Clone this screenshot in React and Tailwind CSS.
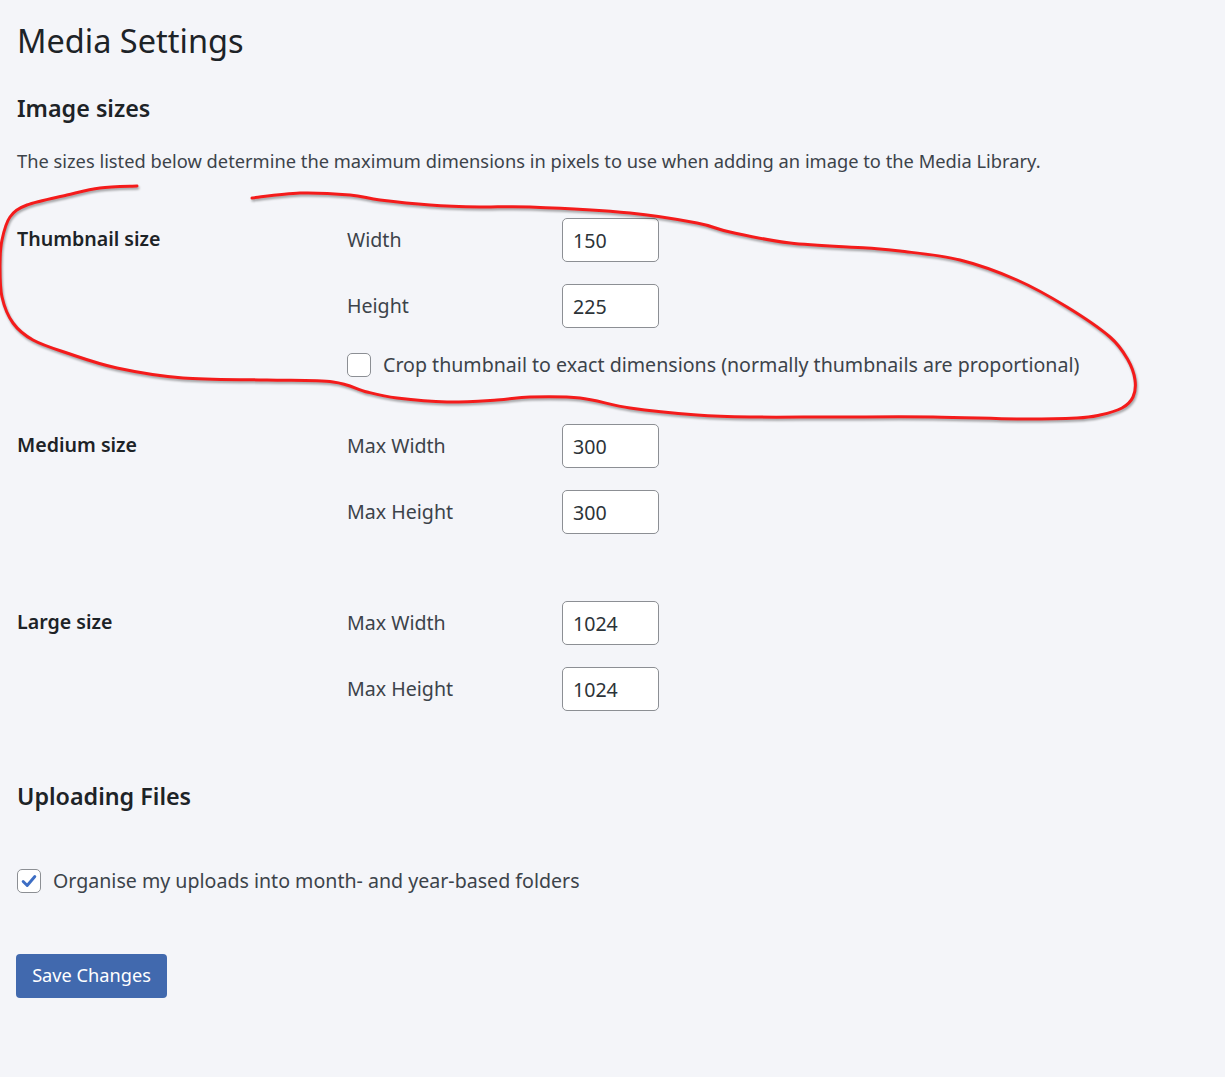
import React from 'react'

const font = "font-['Segoe_UI','Noto_Sans',sans-serif]"

// hand-drawn red loop around the thumbnail block
const loop = [
  [137, 186], [100, 188], [67, 195], [27, 205], [10, 217], [2, 240], [0, 265], [2, 297],
  [13, 323], [33, 340], [67, 353], [117, 368], [183, 378], [267, 380], [333, 382], [367, 392],
  [397, 398], [447, 402], [497, 400], [530, 397], [580, 398], [630, 408], [697, 415], [750, 417],
  [833, 417], [933, 417], [1017, 419], [1077, 418], [1100, 415], [1122, 408], [1133, 397],
  [1135, 380], [1128, 360], [1110, 337], [1067, 307], [1017, 280], [960, 260], [900, 251],
  [867, 248], [790, 243], [730, 232], [697, 223], [630, 213], [530, 207], [480, 207],
  [430, 205], [380, 200], [350, 195], [300, 193], [252, 198],
]

function smoothPath(pts) {
  let d = `M${pts[0][0]},${pts[0][1]}`
  for (let i = 0; i < pts.length - 1; i++) {
    const p0 = pts[i - 1] || pts[i]
    const p1 = pts[i]
    const p2 = pts[i + 1]
    const p3 = pts[i + 2] || p2
    const c1 = [p1[0] + (p2[0] - p0[0]) / 6, p1[1] + (p2[1] - p0[1]) / 6]
    const c2 = [p2[0] - (p3[0] - p1[0]) / 6, p2[1] - (p3[1] - p1[1]) / 6]
    d += ` C${c1[0]},${c1[1]} ${c2[0]},${c2[1]} ${p2[0]},${p2[1]}`
  }
  return d
}

function Checkbox({ checked }) {
  return (
    <span className="flex h-[24px] w-[24px] shrink-0 items-center justify-center rounded-[5px] border border-[#8c8f94] bg-white">
      {checked && (
        <svg className="h-[18px] w-[18px]" viewBox="0 0 20 20" fill="none">
          <path d="M3.5 10.5l4.5 4.5 8.5-10" stroke="#3d6ec4" strokeWidth={3.2} strokeLinecap="round" strokeLinejoin="round" />
        </svg>
      )}
    </span>
  )
}

function Field({ label, value }) {
  return (
    <div className="flex h-[44px] items-center">
      <span className="w-[215px] text-[19.6px]">{label}</span>
      <input
        type="text"
        defaultValue={value}
        className="h-[44px] w-[97px] rounded-[5px] border border-[#8c8f94] bg-white px-[10px] text-[19.6px] text-[#2c3338] outline-none"
      />
    </div>
  )
}

function SizeGroup({ title, fields, className, children }) {
  return (
    <div className={`grid grid-cols-[330px_1fr] ${className}`}>
      <div className="pt-[7px] text-[19.6px] leading-[27px] font-semibold text-[#1d2327]">{title}</div>
      <div className="flex flex-col gap-[22px]">
        {fields.map(f => (
          <Field key={f.label} label={f.label} value={f.value} />
        ))}
        {children}
      </div>
    </div>
  )
}

export default function App() {
  return (
    <div className={`relative min-h-[1077px] bg-[#f4f5f9] px-[17px] text-[#3c434a] ${font}`}>
      <h1 className="pt-[20px] text-[32.5px] leading-[42px] text-[#1d2327]">Media Settings</h1>
      <h2 className="mt-[31px] text-[23.3px] leading-[31px] font-semibold text-[#1d2327]">Image sizes</h2>
      <p className="mt-[23px] text-[18.3px] leading-[27px]">
        The sizes listed below determine the maximum dimensions in pixels to use when adding an image to the Media Library.
      </p>

      <SizeGroup
        className="mt-[44px]"
        title="Thumbnail size"
        fields={[{ label: 'Width', value: '150' }, { label: 'Height', value: '225' }]}
      >
        <label className="mt-[3px] flex items-center gap-[12px] text-[19.6px] leading-[24px]">
          <Checkbox />
          Crop thumbnail to exact dimensions (normally thumbnails are proportional)
        </label>
      </SizeGroup>

      <SizeGroup
        className="mt-[47px]"
        title="Medium size"
        fields={[{ label: 'Max Width', value: '300' }, { label: 'Max Height', value: '300' }]}
      />

      <SizeGroup
        className="mt-[67px]"
        title="Large size"
        fields={[{ label: 'Max Width', value: '1024' }, { label: 'Max Height', value: '1024' }]}
      />

      <h2 className="mt-[70px] text-[23.3px] leading-[31px] font-semibold text-[#1d2327]">Uploading Files</h2>

      <label className="mt-[57px] flex items-center gap-[12px] text-[19.6px] leading-[24px]">
        <Checkbox checked />
        Organise my uploads into month- and year-based folders
      </label>

      <button className="-ml-px mt-[61px] h-[44px] w-[151px] rounded-[4px] bg-[#4169ae] text-[18.2px] text-white">
        Save Changes
      </button>

      <svg className="pointer-events-none absolute left-0 top-0 h-[1077px] w-[1225px]" viewBox="0 0 1225 1077">
        <path
          d={smoothPath(loop)}
          fill="none"
          stroke="#f41b1b"
          strokeWidth={3}
          strokeLinecap="round"
          strokeLinejoin="round"
          style={{ filter: 'drop-shadow(1px 2px 1px rgba(0,0,0,0.35))' }}
        />
      </svg>
    </div>
  )
}
